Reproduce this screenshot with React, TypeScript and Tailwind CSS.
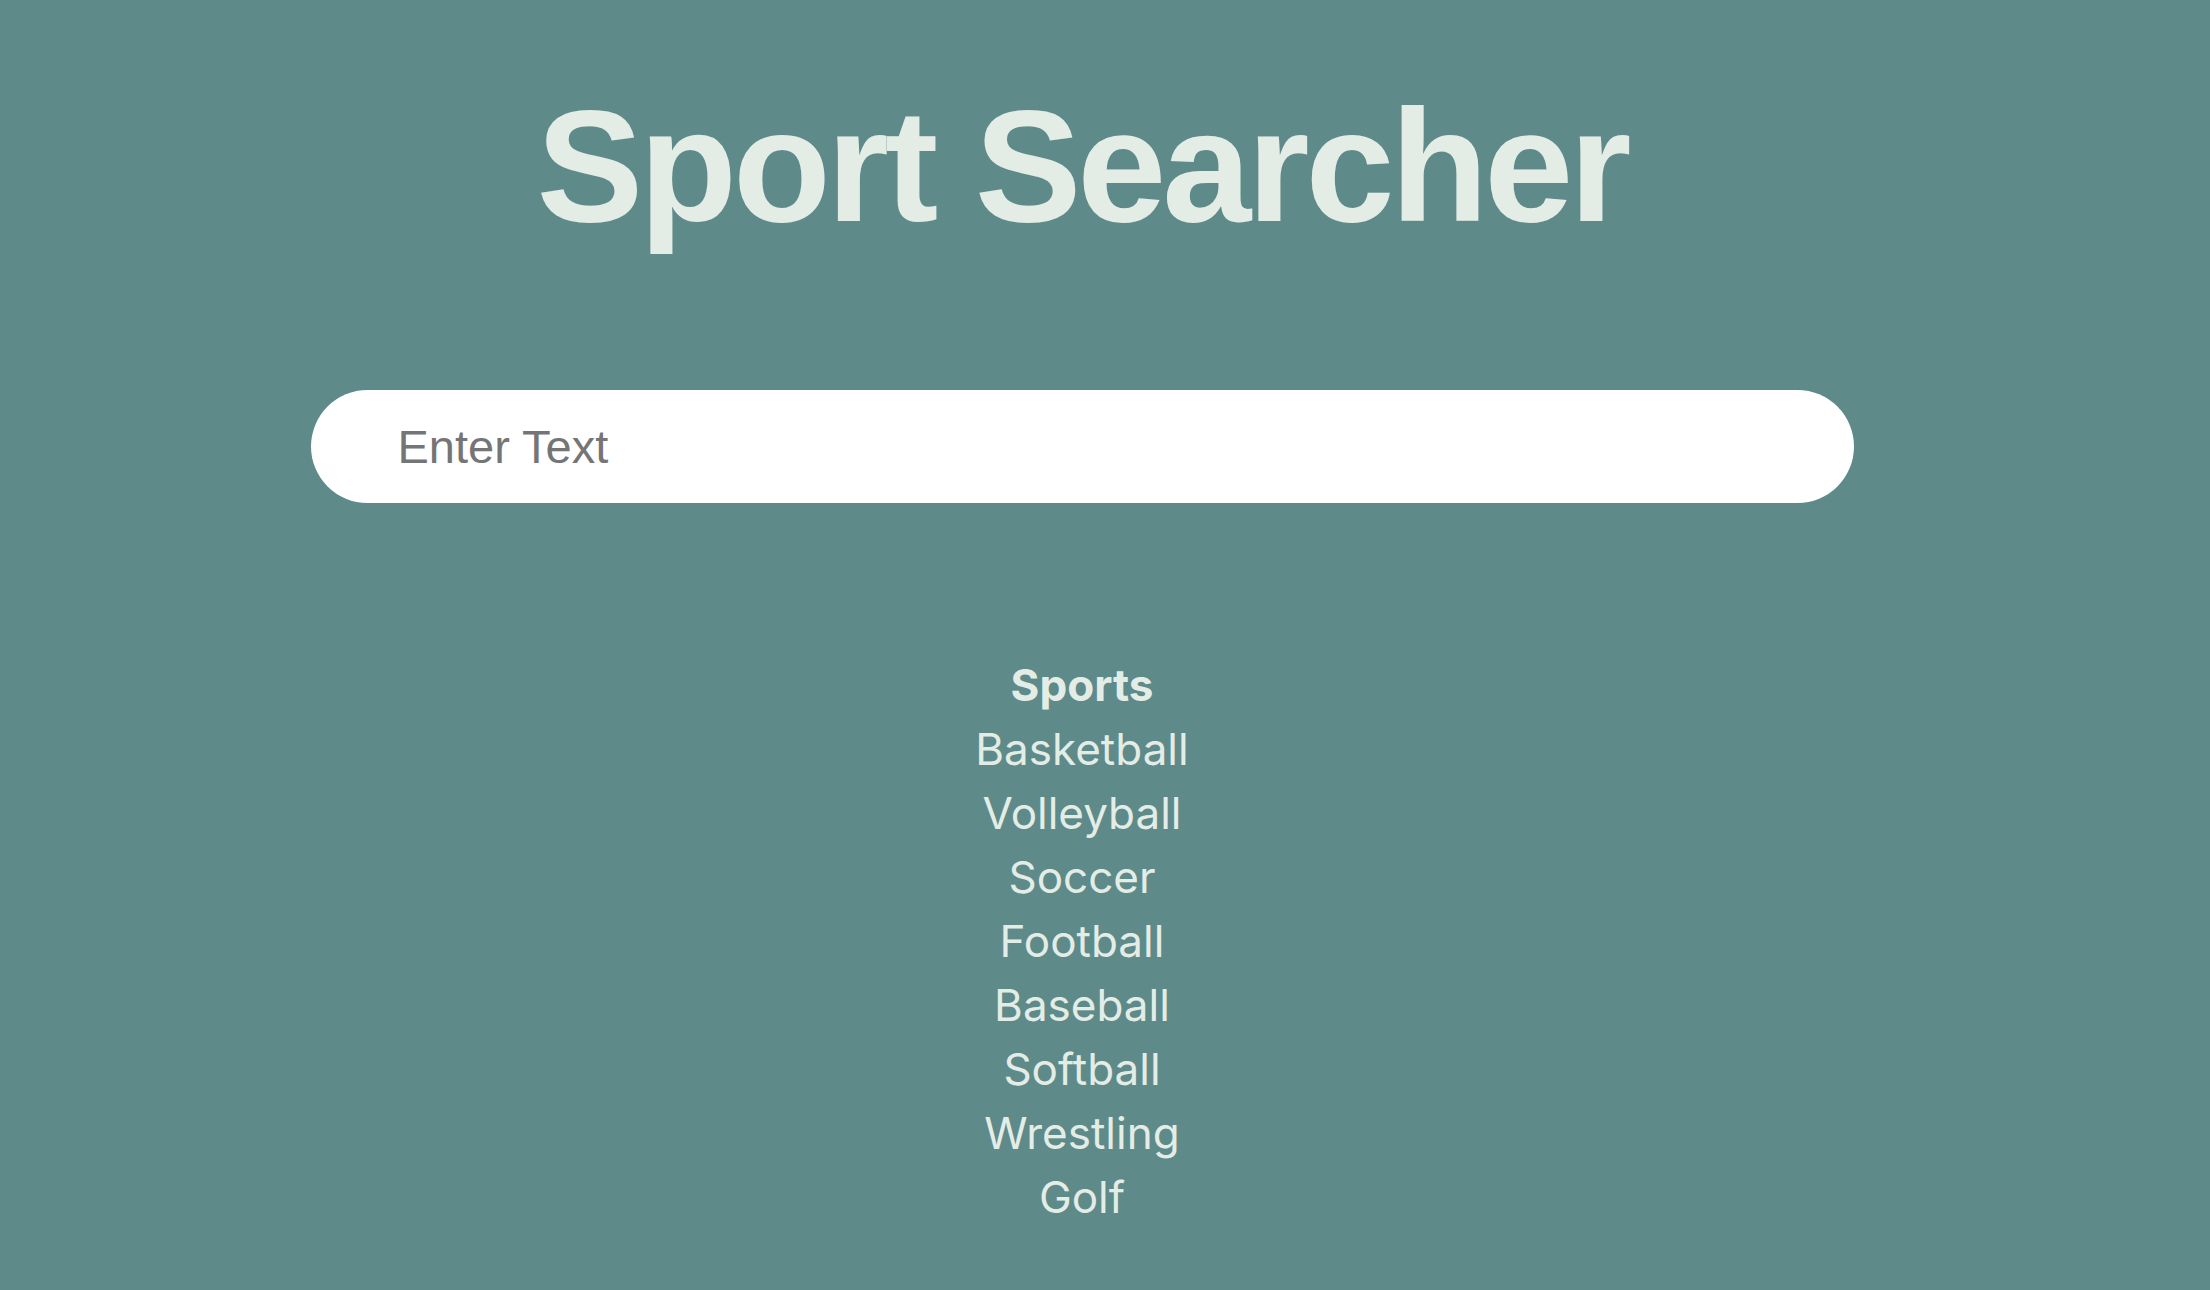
import React, { useState } from 'react';

const sports = ['Basketball', 'Volleyball', 'Soccer', 'Football', 'Baseball', 'Softball', 'Wrestling', 'Golf'];

const App: React.FC = () => {
  const [query, setQuery] = useState('');

  const filtered = sports.filter((s) => s.toLowerCase().includes(query.toLowerCase()));

  return (
    <div className="min-h-screen bg-[#5e8a89]">
      <div className="w-[2164px] flex flex-col items-center pt-[86px] pb-10">
        <h1 className="text-[160px] leading-none font-bold tracking-[-0.025em] text-[#e3ede6] font-['Liberation_Sans',Arial,sans-serif]">
          Sport Searcher
        </h1>

        <input
          type="text"
          value={query}
          onChange={(e) => setQuery(e.target.value)}
          placeholder="Enter Text"
          className="mt-[144px] w-[1543px] h-[113px] rounded-full bg-white pl-[87px] pr-10 text-[47px] text-[#333] placeholder:text-[#757575] outline-none font-['Liberation_Sans',Arial,sans-serif]"
        />

        <ul className="mt-[150px] flex flex-col items-center text-[44px] leading-[64px] text-[#e3ede6] font-['Inter',sans-serif]">
          <li className="font-bold">Sports</li>
          {filtered.map((s) => (
            <li key={s}>{s}</li>
          ))}
        </ul>
      </div>
    </div>
  );
};

export default App;
